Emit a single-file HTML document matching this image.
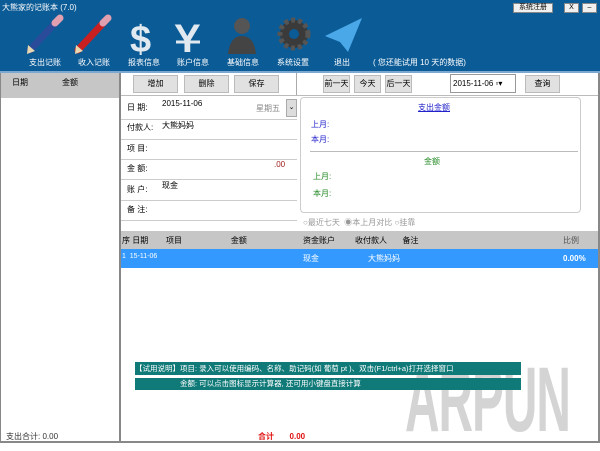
<!DOCTYPE html>
<html><head><meta charset="utf-8"><style>
*{margin:0;padding:0;box-sizing:border-box}
body{width:600px;height:443px;overflow:hidden;font-family:"Liberation Sans","Noto Sans CJK SC",sans-serif;font-size:9px;background:#fff;position:relative;color:#000}
.a{position:absolute}
.hdr{left:0;top:0;width:600px;height:71px;background:#0b5b96}
.lbl{color:#fff;font-size:8px;top:57px;width:50px;text-align:center}
.btn{background:#e1e1e1;border:1px solid #bbb;text-align:center;line-height:16px;height:18px;font-size:8px}
.ln{height:1px;background:#ccc;left:121px;width:176px}
.fl{left:127px;font-size:8px}
</style></head><body>
<div class="a hdr"></div>
<div class="a" style="left:2px;top:2px;color:#fff;font-size:8px">大熊家的记账本 (7.0)</div>
<div class="a" style="left:513px;top:3px;width:40px;height:10px;background:#f0f0f0;border:1px solid #888;font-size:7px;line-height:8px;text-align:center">系统注册</div>
<div class="a" style="left:564px;top:3px;width:15px;height:10px;background:#f0f0f0;border:1px solid #888;font-size:7px;line-height:8px;text-align:center">X</div>
<div class="a" style="left:582px;top:3px;width:15px;height:10px;background:#f0f0f0;border:1px solid #888;font-size:7px;line-height:8px;text-align:center">–</div>
<svg class="a" style="left:20px;top:14px" width="350" height="42">
<g stroke-linecap="round"><line x1="10" y1="36" x2="38" y2="6" stroke="#2a4a9a" stroke-width="7"/><line x1="35" y1="9" x2="40" y2="4" stroke="#e0a0b0" stroke-width="7"/><polygon points="7,40 8,31 15,37" fill="#e8d8b0"/></g>
<g stroke-linecap="round"><line x1="58" y1="36" x2="86" y2="6" stroke="#c82020" stroke-width="7"/><line x1="83" y1="9" x2="88" y2="4" stroke="#e0a0b0" stroke-width="7"/><polygon points="55,40 56,31 63,37" fill="#e8d8b0"/></g>
<text x="110" y="38" font-size="38" font-weight="bold" fill="#e0e8f0" font-family="Liberation Sans">$</text>
<text x="154" y="38" font-size="40" font-weight="bold" fill="#e0e8f0" font-family="Liberation Sans">Y</text>
<line x1="156" y1="28" x2="180" y2="28" stroke="#e0e8f0" stroke-width="3"/>
<circle cx="222" cy="12" r="8" fill="#555"/><path d="M208 40 Q210 22 222 22 Q234 22 236 40Z" fill="#444"/>
<circle cx="274" cy="20" r="14" fill="#3a3a3a" stroke="#555" stroke-width="5" stroke-dasharray="4 3"/><circle cx="274" cy="20" r="5" fill="#0b5b96"/>
<polygon points="305,22 342,4 328,38 320,28" fill="#4aa8e8"/>
</svg>
<div class="a lbl" style="left:20px">支出记账</div>
<div class="a lbl" style="left:69px">收入记账</div>
<div class="a lbl" style="left:119px">报表信息</div>
<div class="a lbl" style="left:168px">账户信息</div>
<div class="a lbl" style="left:218px">基础信息</div>
<div class="a lbl" style="left:268px">系统设置</div>
<div class="a lbl" style="left:317px">退出</div>
<div class="a" style="left:373px;top:57px;color:#fff;font-size:8px">( 您还能试用 10 天的数据)</div>
<div class="a" style="left:0;top:71px;width:600px;height:2px;background:#7aa8d0"></div>
<div class="a" style="left:0;top:73px;width:120px;height:25px;background:#c6c6c6"></div>
<div class="a" style="left:12px;top:77px;font-size:8px">日期</div>
<div class="a" style="left:62px;top:77px;font-size:8px">金额</div>
<div class="a" style="left:119px;top:73px;width:2px;height:370px;background:#888"></div>
<div class="a" style="left:0;top:73px;width:1px;height:370px;background:#888"></div>
<div class="a" style="left:598px;top:73px;width:2px;height:370px;background:#888"></div>
<div class="a" style="left:0;top:441px;width:600px;height:2px;background:#888"></div>
<div class="a" style="left:6px;top:431px;font-size:8px;color:#333">支出合计: 0.00</div>
<div class="a btn" style="left:133px;top:75px;width:45px">增加</div>
<div class="a btn" style="left:184px;top:75px;width:45px">删除</div>
<div class="a btn" style="left:234px;top:75px;width:45px">保存</div>
<div class="a" style="left:296px;top:73px;width:1px;height:22px;background:#aaa"></div>
<div class="a btn" style="left:323px;top:75px;width:27px">前一天</div>
<div class="a btn" style="left:354px;top:75px;width:27px">今天</div>
<div class="a btn" style="left:385px;top:75px;width:27px">后一天</div>
<div class="a" style="left:450px;top:74px;width:66px;height:19px;border:1px solid #999;font-size:8px;line-height:17px;padding-left:2px">2015-11-06 ▫▾</div>
<div class="a btn" style="left:525px;top:75px;width:35px">查询</div>
<div class="a" style="left:121px;top:95px;width:477px;height:1px;background:#bbb"></div>
<div class="a fl" style="top:102px">日 期:</div><div class="a" style="left:162px;top:99px;font-size:8px">2015-11-06</div>
<div class="a" style="left:256px;top:103px;font-size:8px;color:#888">星期五</div>
<div class="a" style="left:286px;top:99px;width:11px;height:18px;background:#ddd;border:1px solid #aaa;font-size:7px;text-align:center;line-height:16px">⌄</div>
<div class="a ln" style="top:119px"></div>
<div class="a fl" style="top:122px">付款人:</div><div class="a" style="left:162px;top:120px;font-size:8px">大熊妈妈</div>
<div class="a ln" style="top:139px"></div>
<div class="a fl" style="top:143px">项 目:</div>
<div class="a ln" style="top:159px"></div>
<div class="a fl" style="top:163px">金 额:</div><div class="a" style="left:274px;top:160px;font-size:8px;color:#a02020">.00</div>
<div class="a ln" style="top:179px"></div>
<div class="a fl" style="top:184px">账 户:</div><div class="a" style="left:162px;top:180px;font-size:8px">现金</div>
<div class="a ln" style="top:200px"></div>
<div class="a fl" style="top:204px">备 注:</div>
<div class="a ln" style="top:220px"></div>
<div class="a" style="left:300px;top:97px;width:281px;height:116px;border:1px solid #ccc;border-radius:4px"></div>
<div class="a" style="left:418px;top:102px;color:#2222cc;font-size:8px;text-decoration:underline">支出金额</div>
<div class="a" style="left:311px;top:119px;color:#2222cc;font-size:8px">上月:</div>
<div class="a" style="left:311px;top:134px;color:#2222cc;font-size:8px">本月:</div>
<div class="a" style="left:310px;top:151px;width:268px;height:1px;background:#bbb"></div>
<div class="a" style="left:424px;top:156px;color:#228822;font-size:8px">金额</div>
<div class="a" style="left:313px;top:171px;color:#228822;font-size:8px">上月:</div>
<div class="a" style="left:313px;top:188px;color:#228822;font-size:8px">本月:</div>
<div class="a" style="left:303px;top:217px;color:#999;font-size:8px">○最近七天 &nbsp;◉本上月对比 ○挂靠</div>
<div class="a" style="left:121px;top:231px;width:477px;height:18px;background:#c6c6c6"></div>
<div class="a" style="left:122px;top:235px;font-size:8px">序 日期 &nbsp; &nbsp; &nbsp; &nbsp;项目 &nbsp; &nbsp; &nbsp; &nbsp; &nbsp; &nbsp; &nbsp; &nbsp; &nbsp; &nbsp; &nbsp;金额</div>
<div class="a" style="left:303px;top:235px;font-size:8px">资金账户 &nbsp; &nbsp; &nbsp; &nbsp; 收付款人 &nbsp; &nbsp; &nbsp; 备注</div>
<div class="a" style="left:563px;top:235px;font-size:8px;color:#555">比例</div>
<div class="a" style="left:121px;top:249px;width:477px;height:19px;background:#3399ff"></div>
<div class="a" style="left:122px;top:253px;font-size:7px;color:#fff">1 &nbsp;15-11-06</div>
<div class="a" style="left:303px;top:253px;font-size:8px;color:#fff">现金</div>
<div class="a" style="left:368px;top:253px;font-size:8px;color:#fff">大熊妈妈</div>
<div class="a" style="left:563px;top:254px;font-size:8px;color:#fff;font-weight:bold">0.00%</div>
<div class="a" style="left:405px;top:350px;font-size:92px;line-height:100px;font-weight:bold;color:#d4d4d4;letter-spacing:-2px;transform:scaleX(0.52);transform-origin:left;white-space:nowrap">ARPUN</div>
<div class="a" style="left:135px;top:362px;width:386px;height:13px;background:#0f7a78;color:#fff;font-size:7.5px;line-height:13px;white-space:nowrap;overflow:hidden">【试用说明】项目: 录入可以使用编码、名称、助记码(如 葡萄 pt )、双击(F1/ctrl+a)打开选择窗口</div>
<div class="a" style="left:135px;top:378px;width:386px;height:12px;background:#0f7a78;color:#fff;font-size:7.5px;line-height:12px;padding-left:45px">金额: 可以点击图标显示计算器, 还可用小键盘直接计算</div>
<div class="a" style="left:258px;top:431px;font-size:8px;color:#e01010;font-weight:bold">合计 &nbsp; &nbsp; &nbsp; 0.00</div>
</body></html>
